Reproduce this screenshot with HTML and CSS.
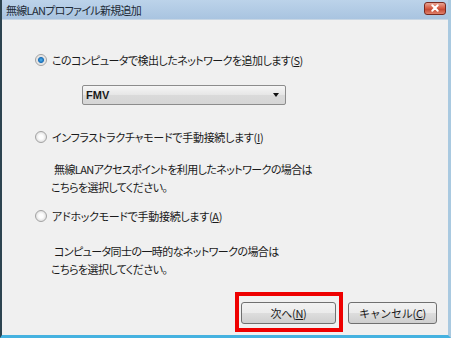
FILE: index.html
```html
<!DOCTYPE html>
<html lang="ja">
<head>
<meta charset="utf-8">
<link rel="stylesheet" href="styles.css">
</head>
<body>
<div class="window">
  <div class="titlebar">
    <span class="title">無線LANプロファイル新規追加</span>
    <span class="close"><svg width="22" height="12" viewBox="0 0 22 12"><path d="M8 3 L14 9 M14 3 L8 9" stroke="#fff" stroke-width="2.2" stroke-linecap="round"/></svg></span>
  </div>
  <div class="content">
    <div class="option opt1"><span class="radio on"></span><span class="label tight">このコンピュータで検出したネットワークを追加します(<u>S</u>)</span></div>
    <div class="select"><span class="val">FMV</span><span class="arrow"></span></div>
    <div class="option opt2"><span class="radio"></span><span class="label">インフラストラクチャモードで手動接続します(<u>I</u>)</span></div>
    <div class="desc d1"><div class="first">無線LANアクセスポイントを利用したネットワークの場合は</div><div>こちらを選択してください。</div></div>
    <div class="option opt3"><span class="radio"></span><span class="label">アドホックモードで手動接続します(<u>A</u>)</span></div>
    <div class="desc d2"><div class="first">コンピュータ同士の一時的なネットワークの場合は</div><div>こちらを選択してください。</div></div>
    <div class="buttons">
      <span class="hl"><button class="btn next">次へ(<u>N</u>)</button></span>
      <button class="btn cancel">キャンセル(<u>C</u>)</button>
    </div>
  </div>
</div>
</body>
</html>
```

FILE: styles.css
```css
* { box-sizing: border-box; }
html, body { margin: 0; padding: 0; }
body {
  width: 451px;
  height: 338px;
  overflow: hidden;
  font-family: "Noto Sans CJK JP", "Noto Sans", sans-serif;
  font-feature-settings: "palt";
  font-size: 11px;
  color: #1a1a1a;
}
.window {
  width: 451px;
  height: 338px;
  display: flex;
  flex-direction: column;
  border-left: 2px solid #2c4450;
  border-right: 3px solid #a9c9e0;
  border-bottom: 3px solid #45b2e0;
  background: #f0f0f0;
}
.titlebar {
  height: 20px;
  display: flex;
  align-items: center;
  justify-content: space-between;
  padding: 0 2px 0 4px;
  background: linear-gradient(#bcd3ea, #a9c4e0);
  border-bottom: 1px solid #c8d6e4;
}
.title { font-size: 11px; letter-spacing: -0.7px; color: #1d2a36; }
.close {
  width: 22px;
  height: 13px;
  margin-top: -3px;
  display: flex;
  align-items: center;
  justify-content: center;
  border: 1px solid #7a2a20;
  border-radius: 3px;
  background: linear-gradient(#e9a493, #d4573f 50%, #c0412c 51%, #e0816c);
}
.content {
  flex: 1;
  display: flex;
  flex-direction: column;
  padding: 32px 11px 0 33px;
}
.option {
  height: 16px;
  display: flex;
  align-items: center;
  gap: 5px;
}
.label { letter-spacing: -0.3px; }
.label.tight { letter-spacing: -0.55px; }
.radio {
  width: 12px;
  height: 12px;
  border-radius: 50%;
  border: 1px solid #a3a3a3;
  background: radial-gradient(circle, #fdfdfd 30%, #dcdcdc 80%);
  flex: none;
}
.radio.on {
  background: radial-gradient(circle, #4fb6f0 0, #1c6fb8 2.5px, #e0e0e0 3.5px, #f4f4f4 6px);
}
.select {
  margin: 17px 0 0 47px;
  width: 204px;
  height: 20px;
  border: 1px solid #8c8c8c;
  border-radius: 2px;
  background: linear-gradient(#f6f6f6, #e6e6e6 50%, #dadada 51%, #d6d6d6);
  display: flex;
  align-items: center;
  justify-content: space-between;
  padding: 0 6px 0 3px;
}
.val { font-family: "Liberation Sans", sans-serif; font-weight: bold; font-size: 11px; }
.arrow {
  width: 0; height: 0;
  border-left: 3.5px solid transparent;
  border-right: 3.5px solid transparent;
  border-top: 4px solid #111;
}
.opt2 { margin-top: 24px; }
.opt3 { margin-top: 12px; }
.desc {
  line-height: 18px;
  padding-left: 16px;
  letter-spacing: -0.6px;
}
.desc .first { text-indent: 3px; }
.d1 { margin-top: 15px; }
.d2 { margin-top: 18px; }
.buttons {
  margin-top: 24px;
  display: flex;
  justify-content: flex-end;
  gap: 12px;
}
.hl { position: relative; display: flex; }
.hl::after {
  content: "";
  position: absolute;
  left: -6px; top: -10px; right: -7px; bottom: -8px;
  border: 4px solid #ee0000;
}
.btn {
  height: 22px;
  font-family: inherit;
  font-size: 11px;
  letter-spacing: -0.3px;
  color: #1a1a1a;
  border: 1px solid #707070;
  border-radius: 3px;
  background: linear-gradient(#f2f2f2, #ebebeb 50%, #dddddd 51%, #cfcfcf);
  padding: 0;
}
.next { width: 95px; }
.cancel { width: 89px; }
```
